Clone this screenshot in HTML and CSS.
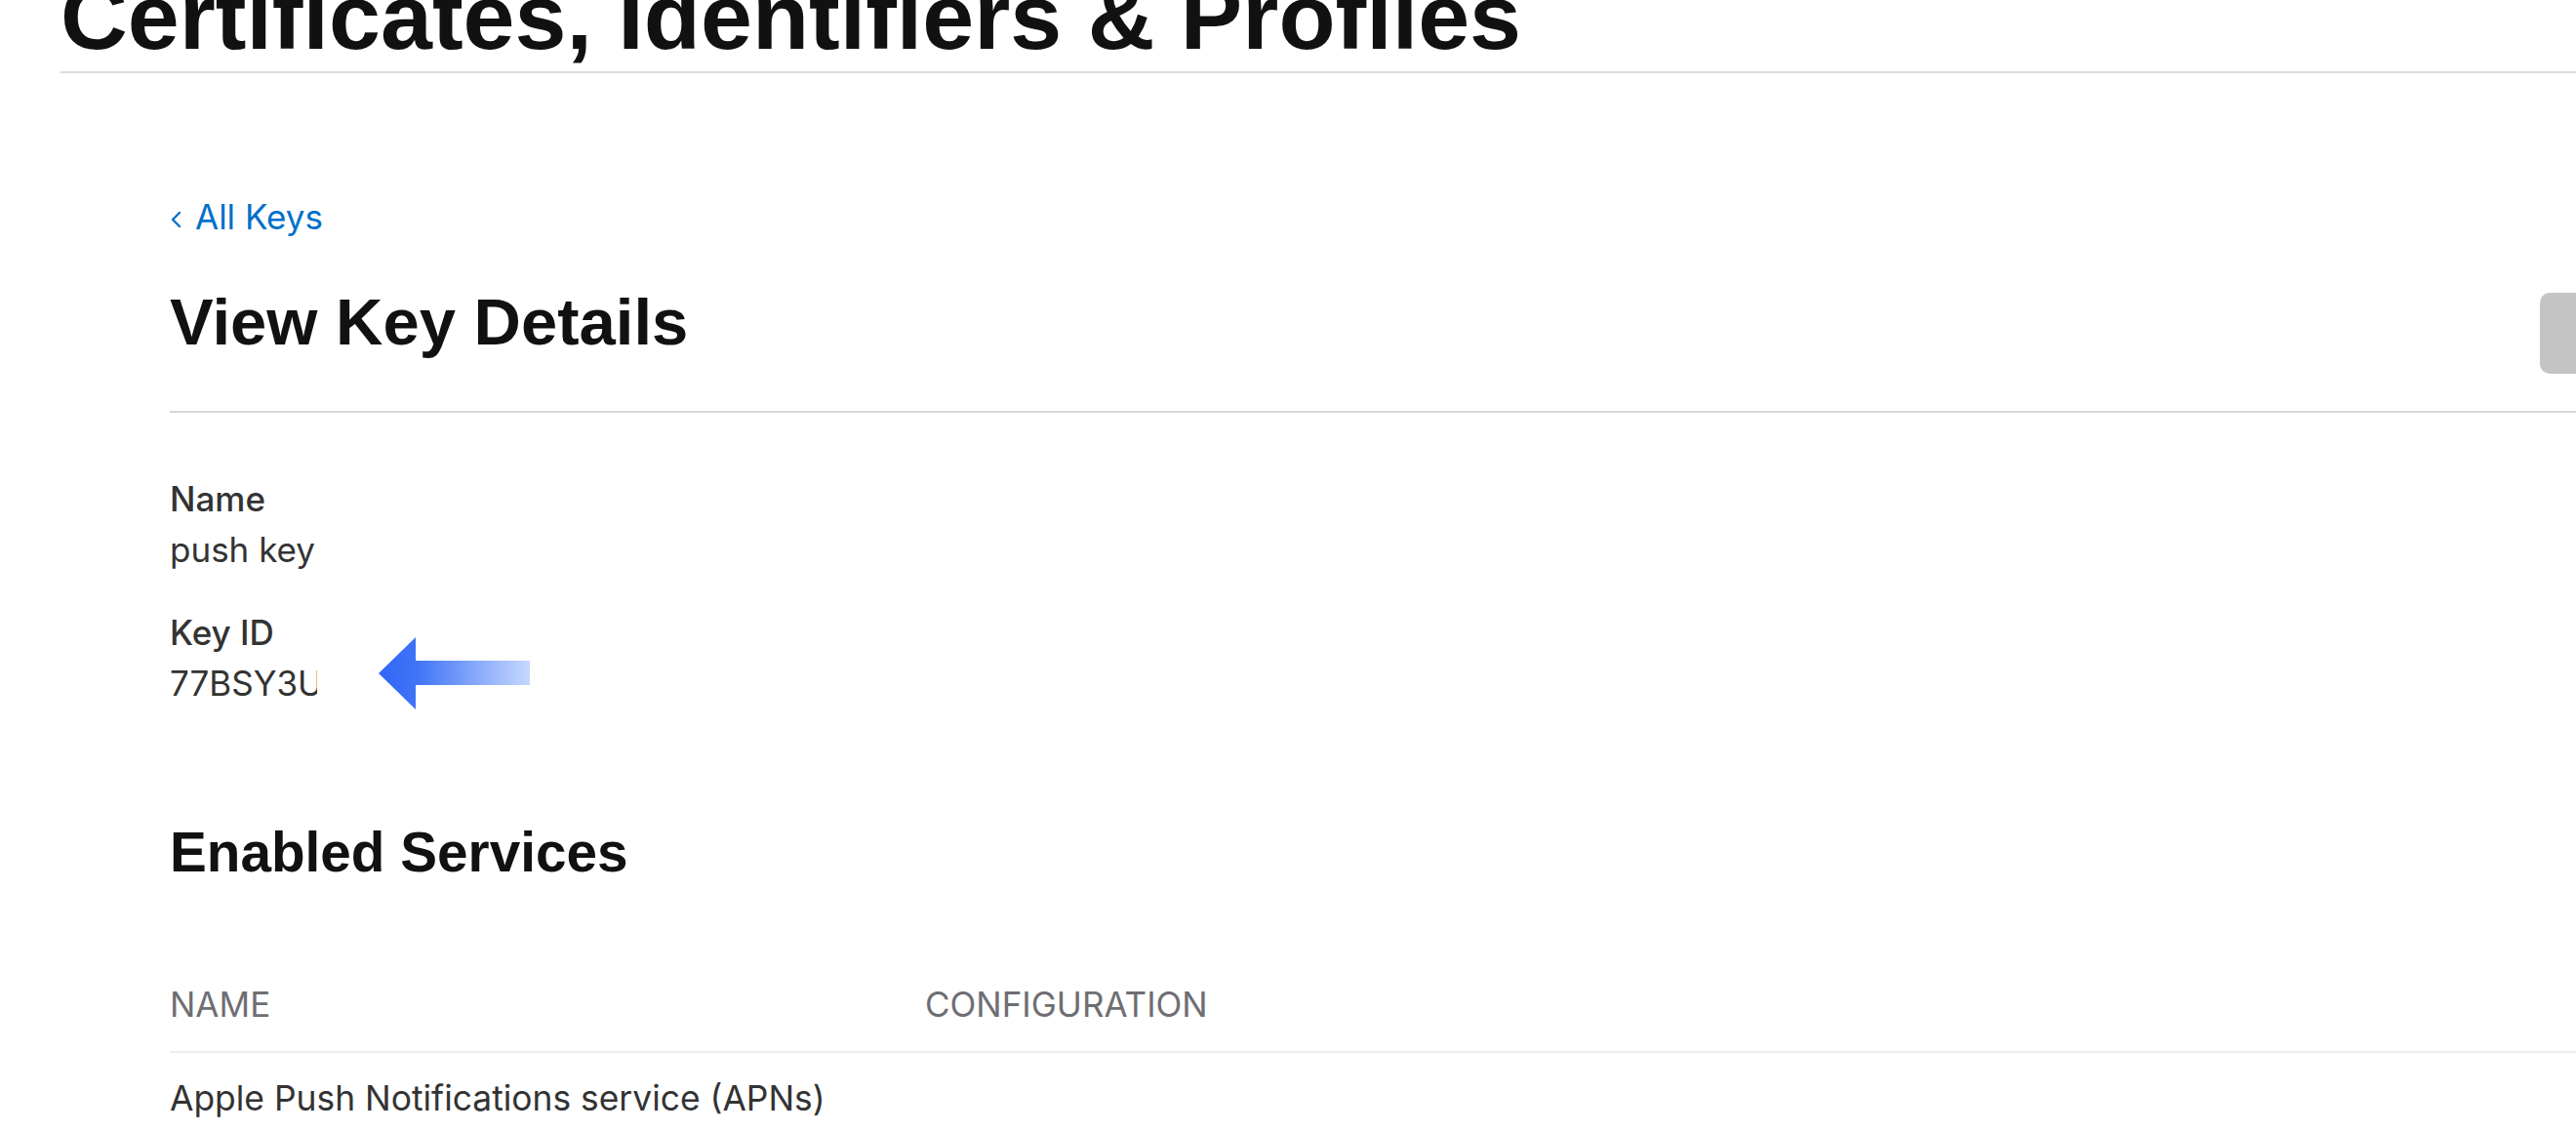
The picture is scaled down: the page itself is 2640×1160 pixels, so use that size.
FILE: index.html
```html
<!DOCTYPE html>
<html lang="en">
<head>
<meta charset="utf-8">
<title>View Key Details - Certificates, Identifiers &amp; Profiles</title>
<link rel="stylesheet" href="styles.css">
</head>
<body>
<header class="site-header">
  <h1 class="site-title">Certificates, Identifiers &amp; Profiles</h1>
</header>
<main class="content">
  <a class="back-link" href="#">
    <svg class="chev" width="12" height="18" viewBox="0 0 12 18" aria-hidden="true"><path d="M10 2 L3 9 L10 16" fill="none" stroke="#0070c9" stroke-width="2.4" stroke-linecap="round" stroke-linejoin="round"/></svg>
    <span>All Keys</span>
  </a>
  <div class="page-head">
    <h2 class="page-title">View Key Details</h2>
    <button class="btn-gray" type="button" aria-label="Revoke"></button>
  </div>
  <section class="details">
    <div class="field">
      <div class="label">Name</div>
      <div class="value">push key</div>
    </div>
    <div class="field">
      <div class="label">Key ID</div>
      <div class="value value-id">
        <span class="id-text">77BSY3U</span>
        <svg class="arrow" width="155" height="74" viewBox="0 0 155 74" aria-hidden="true">
          <defs>
            <linearGradient id="arrowGrad" x1="0" y1="0" x2="1" y2="0">
              <stop offset="0" stop-color="#2f66f6"/>
              <stop offset="0.25" stop-color="#3f74f7"/>
              <stop offset="1" stop-color="#c6d8fc"/>
            </linearGradient>
          </defs>
          <polygon points="0,37 38,0 38,24 155,24 155,49 38,49 38,74" fill="url(#arrowGrad)"/>
        </svg>
      </div>
    </div>
  </section>
  <h3 class="section-title">Enabled Services</h3>
  <div class="table">
    <div class="thead">
      <div class="col-name">NAME</div>
      <div class="col-config">CONFIGURATION</div>
    </div>
    <div class="trow">
      <div class="col-name">Apple Push Notifications service (APNs)</div>
      <div class="col-config"></div>
    </div>
  </div>
</main>
</body>
</html>
```
FILE: styles.css
```css
html, body {
  margin: 0;
  padding: 0;
  overflow: hidden;
  background: #ffffff;
}

body {
  width: 2640px;
  height: 1160px;
  font-family: Inter, "Liberation Sans", Arial, sans-serif;
  color: #333333;
}

.site-header {
  margin: -30px 0 0 62px;
  padding-bottom: 8px;
  border-bottom: 2px solid #dcdcdc;
}

.site-title {
  margin: 0;
  font: 700 95.2px/95px "Liberation Sans", Arial, sans-serif;
  color: #111111;
  white-space: nowrap;
}

.content {
  margin-left: 174px;
  width: 2599px;
}

.back-link {
  display: flex;
  align-items: flex-start;
  width: fit-content;
  margin-top: 126px;
  font-size: 35px;
  line-height: 42px;
  color: #0070c9;
  text-decoration: none;
}

.chev {
  margin-top: 15px;
  margin-right: 14px;
  flex: none;
}

.page-head {
  display: flex;
  justify-content: space-between;
  align-items: flex-start;
  margin-top: 46.6px;
  padding-bottom: 38px;
  border-bottom: 2px solid #d8d8d8;
}

.page-title {
  margin: 0;
  font: 700 67px/80px "Liberation Sans", Arial, sans-serif;
  color: #111111;
}

.btn-gray {
  margin-top: 10px;
  width: 170px;
  height: 83px;
  border: 0;
  border-radius: 10px;
  background: #c4c4c4;
  padding: 0;
}

.details {
  margin-top: 62.4px;
}

.field + .field {
  margin-top: 33px;
}

.label {
  font-weight: 500;
  font-size: 35px;
  line-height: 52px;
  color: #333333;
}

.value {
  font-size: 35px;
  line-height: 52px;
  color: #333333;
}

.value-id {
  position: relative;
}

.id-text {
  display: inline-block;
  width: 151px;
  overflow: hidden;
  white-space: nowrap;
  vertical-align: top;
}

.arrow {
  position: absolute;
  left: 214px;
  top: -21px;
}

.section-title {
  margin: 114px 0 0;
  font: 700 56.7px/68px "Liberation Sans", Arial, sans-serif;
  color: #111111;
}

.table {
  margin-top: 100px;
}

.thead {
  display: flex;
  padding-bottom: 26.7px;
  border-bottom: 2px solid #ececec;
  font-size: 35px;
  line-height: 42px;
  color: #6e6e73;
}

.trow {
  display: flex;
  padding-top: 26px;
  font-size: 35.4px;
  line-height: 42px;
  color: #333333;
}

.col-name {
  width: 774px;
  flex: none;
}

.col-config {
  flex: 1;
}
```
